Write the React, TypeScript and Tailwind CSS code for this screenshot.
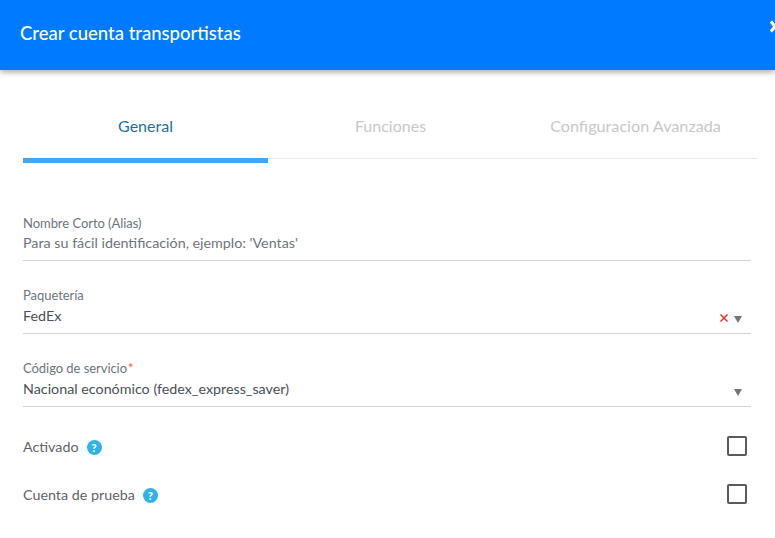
export default function App() {
  const lato = "font-['Lato',sans-serif]";
  return (
    <div className={`${lato} w-[775px] h-[538px] bg-white overflow-hidden`}>
      <header className="h-[70px] bg-[#007bff] shadow-[0_2px_6px_rgba(0,0,0,0.35)] flex items-center justify-between pl-5 relative overflow-hidden">
        <h1 className="text-[18.5px] font-medium text-white -mt-[3px]">Crear cuenta transportistas</h1>
        <svg className="absolute left-[770px] top-[20px]" width="8" height="13" viewBox="0 0 8 13"><path d="M1 1.500l8 10M9 1.500l-8 10" stroke="#ffffff" strokeWidth="3" fill="none" /></svg>
      </header>

      <nav className="ml-[23px] w-[735px] mt-[34px] flex border-b border-[#e6ebf1] h-[55px]">
        <div className="w-[245px] h-[59px] flex justify-center pt-[12px] text-[16px] leading-[20px] text-[#1a6fa8] border-b-[5px] border-[#42a5f5]">General</div>
        <div className="w-[245px] flex justify-center pt-[12px] text-[16px] leading-[20px] text-[#c8c8c8]">Funciones</div>
        <div className="w-[245px] flex justify-center pt-[12px] text-[16.200px] leading-[20px] text-[#c8c8c8]">Configuracion Avanzada</div>
      </nav>

      <form className="ml-[23px] w-[728px] mt-[55px] text-[14.300px]">
        <div className="h-[47px] border-b border-[#ced4da]">
          <div className="text-[13px] leading-[17px] pt-[1px] box-content tracking-[-0.050px] text-[#6c757d]">Nombre Corto (Alias)</div>
          <div className="leading-[20px] mt-[1px] text-[#6c757d]">Para su fácil identificación, ejemplo: 'Ventas'</div>
        </div>
        <div className="mt-[25px] h-[48px] border-b border-[#ced4da] relative">
          <div className="text-[13px] leading-[17px] pt-[1px] box-content tracking-[-0.050px] text-[#6c757d]">Paquetería</div>
          <div className="leading-[20px] mt-[2px] text-[#495057]">FedEx</div>
          <svg className="absolute left-[697px] top-[28px]" width="8" height="8" viewBox="0 0 8 8"><path d="M0.500 0.500l7 7M7.500 0.500l-7 7" stroke="#ff2a2a" strokeWidth="1.500" /></svg>
          <svg className="absolute left-[711px] top-[30px]" width="8" height="7" viewBox="0 0 8 7"><path d="M0 0h8L4 7z" fill="#757575" /></svg>
        </div>
        <div className="mt-[25px] h-[48px] border-b border-[#ced4da] relative">
          <div className="text-[13px] leading-[17px] pt-[1px] box-content tracking-[-0.050px] text-[#6c757d]">Código de servicio<span className="text-[#ff5a36] ml-[1px]">*</span></div>
          <div className="leading-[20px] mt-[2px] text-[#495057]">Nacional económico (fedex_express_saver)</div>
          <svg className="absolute left-[711px] top-[30px]" width="8" height="7" viewBox="0 0 8 7"><path d="M0 0h8L4 7z" fill="#757575" /></svg>
        </div>
        <div className="mt-[29px] h-[20px] flex items-center justify-between">
          <div className="flex items-center text-[#5f6368] mt-[2px]">Activado<Help /></div>
          <span className="w-5 h-5 border-2 border-[#5a5a5a] rounded-[2px] mr-[4px]" />
        </div>
        <div className="mt-[28px] h-[20px] flex items-center justify-between">
          <div className="flex items-center text-[#5f6368] mt-[2px]">Cuenta de prueba<Help /></div>
          <span className="w-5 h-5 border-2 border-[#5a5a5a] rounded-[2px] mr-[4px]" />
        </div>
      </form>
    </div>
  );
}

function Help() {
  return (
    <span className="ml-[8px] w-[15px] h-[15px] rounded-full bg-[#2fb2ea] text-white text-[11px] font-black flex items-center justify-center leading-none">?</span>
  );
}
